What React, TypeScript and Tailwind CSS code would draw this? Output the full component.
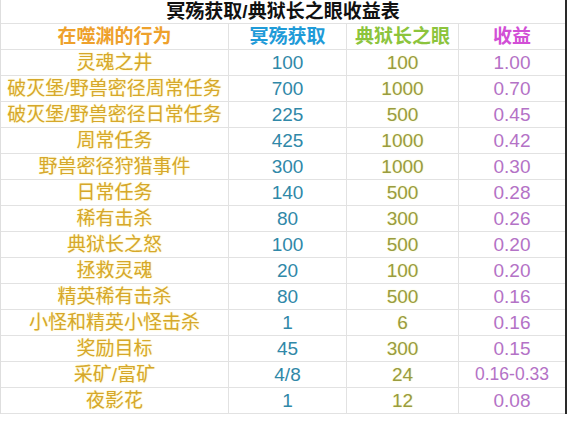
import React from 'react';

type Row = { action: string; soul: string; eye: string; ratio: string };

const rows: Row[] = [
  { action: '灵魂之井', soul: '100', eye: '100', ratio: '1.00' },
  { action: '破灭堡/野兽密径周常任务', soul: '700', eye: '1000', ratio: '0.70' },
  { action: '破灭堡/野兽密径日常任务', soul: '225', eye: '500', ratio: '0.45' },
  { action: '周常任务', soul: '425', eye: '1000', ratio: '0.42' },
  { action: '野兽密径狩猎事件', soul: '300', eye: '1000', ratio: '0.30' },
  { action: '日常任务', soul: '140', eye: '500', ratio: '0.28' },
  { action: '稀有击杀', soul: '80', eye: '300', ratio: '0.26' },
  { action: '典狱长之怒', soul: '100', eye: '500', ratio: '0.20' },
  { action: '拯救灵魂', soul: '20', eye: '100', ratio: '0.20' },
  { action: '精英稀有击杀', soul: '80', eye: '500', ratio: '0.16' },
  { action: '小怪和精英小怪击杀', soul: '1', eye: '6', ratio: '0.16' },
  { action: '奖励目标', soul: '45', eye: '300', ratio: '0.15' },
  { action: '采矿/富矿', soul: '4/8', eye: '24', ratio: '0.16-0.33' },
  { action: '夜影花', soul: '1', eye: '12', ratio: '0.08' },
];

const cell = 'flex items-center justify-center leading-none border-r border-[#e2e2e2] last:border-r-0';

const App: React.FC = () => {
  return (
    <div className="w-[571px] h-[422px] bg-white font-['Liberation_Sans','Noto_Sans_CJK_SC',sans-serif]">
      <div className="w-[567px] border-l border-r-2 border-l-[#dedede] border-r-[#2a2a2a]">
        {/* title */}
        <div className="h-[24px] flex items-center justify-center border-b border-[#e2e2e2]">
          <span className="text-[19px] font-bold text-[#111] leading-none">冥殇获取/典狱长之眼收益表</span>
        </div>

        {/* header */}
        <div className="h-[26px] grid grid-cols-[228px_118px_112px_106px] border-b border-[#e2e2e2] font-bold text-[19px]">
          <div className={`${cell} text-[#eea12c]`}>在噬渊的行为</div>
          <div className={`${cell} text-[#1f9bd8]`}>冥殇获取</div>
          <div className={`${cell} text-[#8cc43c]`}>典狱长之眼</div>
          <div className={`${cell} text-[#d24fd6]`}>收益</div>
        </div>

        {rows.map((r) => (
          <div key={r.action} className="h-[26px] grid grid-cols-[228px_118px_112px_106px] border-b border-[#e2e2e2] text-[19px]">
            <div className={`${cell} text-[#d6a82a] [text-shadow:0_0_2px_#fff2a8]`}>{r.action}</div>
            <div className={`${cell} text-[#3088a8]`}>{r.soul}</div>
            <div className={`${cell} text-[#9a9c3e] [text-shadow:0_0_2px_#f4f7b8]`}>{r.eye}</div>
            <div className={`${cell} text-[#b472c6] ${r.ratio.length > 5 ? 'text-[17.5px]' : ''}`}>{r.ratio}</div>
          </div>
        ))}
      </div>
    </div>
  );
};

export default App;
